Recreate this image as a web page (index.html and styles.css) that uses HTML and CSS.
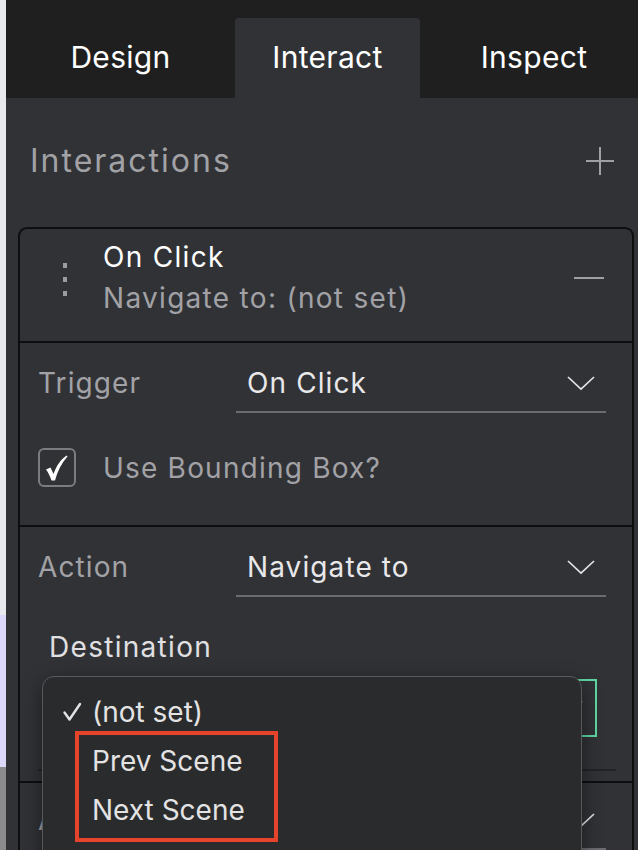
FILE: index.html
```html
<!DOCTYPE html>
<html>
<head>
<meta charset="utf-8">
<link rel="stylesheet" href="styles.css">
</head>
<body>
<div class="app">
  <div class="strip">
    <div class="strip-light"></div>
    <div class="strip-lav"></div>
    <div class="strip-gray"></div>
  </div>
  <div class="panel">
    <div class="tabs">
      <div class="tab">Design</div>
      <div class="tab active">Interact</div>
      <div class="tab tab-last">Inspect</div>
    </div>
    <div class="section-head">
      <span class="section-title">Interactions</span>
      <svg class="plus" width="28" height="28" viewBox="0 0 28 28"><path d="M14 0V28M0 14H28" stroke="#a0a0a4" stroke-width="2"/></svg>
    </div>
    <div class="card">
      <div class="card-head">
        <div class="dots"><span></span><span></span><span></span></div>
        <div class="head-text">
          <div class="head-title">On Click</div>
          <div class="head-sub">Navigate to: (not set)</div>
        </div>
        <div class="minus"></div>
      </div>
      <div class="block trigger">
        <div class="row">
          <div class="label">Trigger</div>
          <div class="select">
            <span class="value">On Click</span>
            <svg class="chev" width="30" height="16" viewBox="0 0 30 16"><path d="M2 2L15 14L28 2" fill="none" stroke="#e4e4e6" stroke-width="1.7"/></svg>
          </div>
        </div>
        <div class="check-row">
          <div class="checkbox">
            <svg width="24" height="28" viewBox="0 0 24 28"><path d="M2 15.5 L6.5 13.5 L9.5 20 C12.5 11.5 16.5 6 22.5 1.5 L23.5 2.5 C17.5 9 13.5 17 11 26.5 L7.5 26.5 C6 22 4.2 18.5 2 15.5Z" fill="#ffffff"/></svg>
          </div>
          <span class="check-label">Use Bounding Box?</span>
        </div>
      </div>
      <div class="block action">
        <div class="row">
          <div class="label">Action</div>
          <div class="select">
            <span class="value">Navigate to</span>
            <svg class="chev" width="30" height="16" viewBox="0 0 30 16"><path d="M2 2L15 14L28 2" fill="none" stroke="#e4e4e6" stroke-width="1.7"/></svg>
          </div>
        </div>
        <div class="dest-label">Destination</div>
        <div class="dest-select">
          <svg class="dest-chev" width="20" height="12" viewBox="0 0 20 12"><path d="M2 2L10 10L18 2" fill="none" stroke="#e4e4e6" stroke-width="1.8"/></svg>
        </div>
        <div class="dark-line"></div>
      </div>
      <div class="block anim">
        <div class="row">
          <div class="label">A</div>
          <div class="select">
            <span class="value"></span>
            <svg class="chev" width="30" height="16" viewBox="0 0 30 16"><path d="M2 2L15 14L28 2" fill="none" stroke="#e4e4e6" stroke-width="1.7"/></svg>
          </div>
        </div>
      </div>
    </div>
  </div>
</div>

<div class="popup">
  <div class="item"><svg class="tick" width="20" height="20" viewBox="0 0 20 20"><path d="M2.5 10.5 L7.5 17.5 L18 2" fill="none" stroke="#e3e3e4" stroke-width="2.4" stroke-linecap="round" stroke-linejoin="round"/></svg>(not set)</div>
  <div class="item">Prev Scene</div>
  <div class="item">Next Scene</div>
</div>
<div class="highlight"></div>
</body>
</html>
```

FILE: styles.css
```css
html, body {
  margin: 0;
  padding: 0;
  width: 638px;
  height: 850px;
  overflow: hidden;
  background: #313236;
  font-family: "Inter", "Noto Sans", sans-serif;
}

.app {
  display: flex;
  width: 638px;
  height: 850px;
}

.strip {
  width: 6px;
  flex: none;
  display: flex;
  flex-direction: column;
}
.strip-light { height: 615px; background: #e8e9ec; }
.strip-lav { height: 152px; background: #dcd8f9; }
.strip-gray { flex: 1; background: #8b8b8d; }

.panel {
  flex: 1;
  background: #313236;
  display: flex;
  flex-direction: column;
  min-width: 0;
}

.tabs {
  height: 98px;
  flex: none;
  box-sizing: border-box;
  padding-top: 18px;
  background: #1f1f1f;
  display: grid;
  grid-template-columns: 229px 185px 1fr;
}
.tab {
  display: flex;
  align-items: center;
  justify-content: center;
  color: #ffffff;
  font-size: 30px;
  letter-spacing: 0.3px;
  padding-bottom: 2px;
}
.tab.active {
  background: #313236;
  border-radius: 4px 4px 0 0;
}
.tab-last { padding-left: 10px; }

.section-head {
  height: 129px;
  flex: none;
  box-sizing: border-box;
  display: flex;
  align-items: flex-start;
  justify-content: space-between;
  padding: 45px 24px 0 24px;
}
.section-title {
  color: #a2a2a6;
  font-size: 32px;
  letter-spacing: 2px;
  line-height: 36px;
}
.plus { margin-top: 4px; }

.card {
  margin: 0 4px 0 12px;
  border: 2px solid #0e0e10;
  border-bottom: none;
  border-radius: 9px 9px 0 0;
  flex: 1;
}

.card-head {
  height: 114px;
  box-sizing: border-box;
  border-bottom: 2px solid #0e0e10;
  display: flex;
  align-items: flex-start;
  padding: 8px 28px 0 43px;
}
.dots {
  display: flex;
  flex-direction: column;
  gap: 9px;
  padding-top: 26px;
  width: 40px;
  flex: none;
}
.dots span {
  width: 4px;
  height: 5px;
  background: #9c9c9f;
}
.head-text { flex: 1; }
.head-title {
  color: #ffffff;
  font-size: 28px;
  letter-spacing: 1.3px;
  line-height: 41px;
}
.head-sub {
  color: #a2a2a6;
  font-size: 28px;
  letter-spacing: 1.3px;
  line-height: 41px;
}
.minus {
  width: 30px;
  height: 2px;
  background: #a0a0a3;
  margin-top: 40px;
}

.block {
  border-bottom: 2px solid #0e0e10;
  padding: 0 26px 0 18px;
  box-sizing: border-box;
}
.trigger { height: 184px; padding-top: 20px; }
.action { height: 256px; padding-top: 20px; }

.row {
  display: flex;
  align-items: flex-start;
  height: 50px;
}
.label {
  width: 198px;
  flex: none;
  color: #a2a2a6;
  font-size: 28px;
  letter-spacing: 1.1px;
  line-height: 40px;
}
.select {
  flex: 1;
  height: 48px;
  border-bottom: 2px solid #6b6b70;
  display: flex;
  justify-content: space-between;
  align-items: flex-start;
  padding: 0 10px 0 11px;
}
.value {
  color: #e8e8ea;
  font-size: 28px;
  letter-spacing: 1.1px;
  line-height: 40px;
}
.chev { margin-top: 12px; }

.check-row {
  display: flex;
  align-items: center;
  margin-top: 35px;
}
.checkbox {
  width: 38px;
  height: 39px;
  box-sizing: border-box;
  border: 2px solid #7b7b80;
  border-radius: 6px;
  display: flex;
  align-items: center;
  justify-content: center;
}
.checkbox svg { margin-left: -2px; }
.check-label {
  margin-left: 27px;
  color: #a2a2a6;
  font-size: 28px;
  letter-spacing: 1.2px;
}

.dest-label {
  margin: 30px 0 0 11px;
  color: #e0e0e2;
  font-size: 28px;
  letter-spacing: 1.3px;
  line-height: 40px;
}
.dest-select {
  margin: 12px 9px 0 10px;
  height: 58px;
  box-sizing: border-box;
  border: 2px solid #5fd6a3;
  position: relative;
}
.dest-chev { position: absolute; right: 11px; top: 18px; }
.dark-line {
  height: 2px;
  background: #222326;
  margin: 32px -10px 0 0;
}

.anim { border-bottom: none; padding-top: 17px; }

.popup {
  position: absolute;
  left: 42px;
  top: 676px;
  width: 540px;
  height: 200px;
  box-sizing: border-box;
  background: #2a2b2d;
  border: 1.5px solid #58595c;
  border-radius: 12px;
  box-shadow: 0 6px 20px rgba(0,0,0,0.45);
  padding-top: 11px;
  font-family: "Inter", "Liberation Sans", sans-serif;
}
.item {
  position: relative;
  padding-left: 49px;
  color: #e3e3e4;
  font-size: 28px;
  line-height: 49px;
  height: 49px;
}
.tick {
  position: absolute;
  left: 19px;
  top: 14px;
}

.highlight {
  position: absolute;
  left: 75px;
  top: 731px;
  width: 203px;
  height: 111px;
  box-sizing: border-box;
  border: 4px solid #e5432c;
}
```
